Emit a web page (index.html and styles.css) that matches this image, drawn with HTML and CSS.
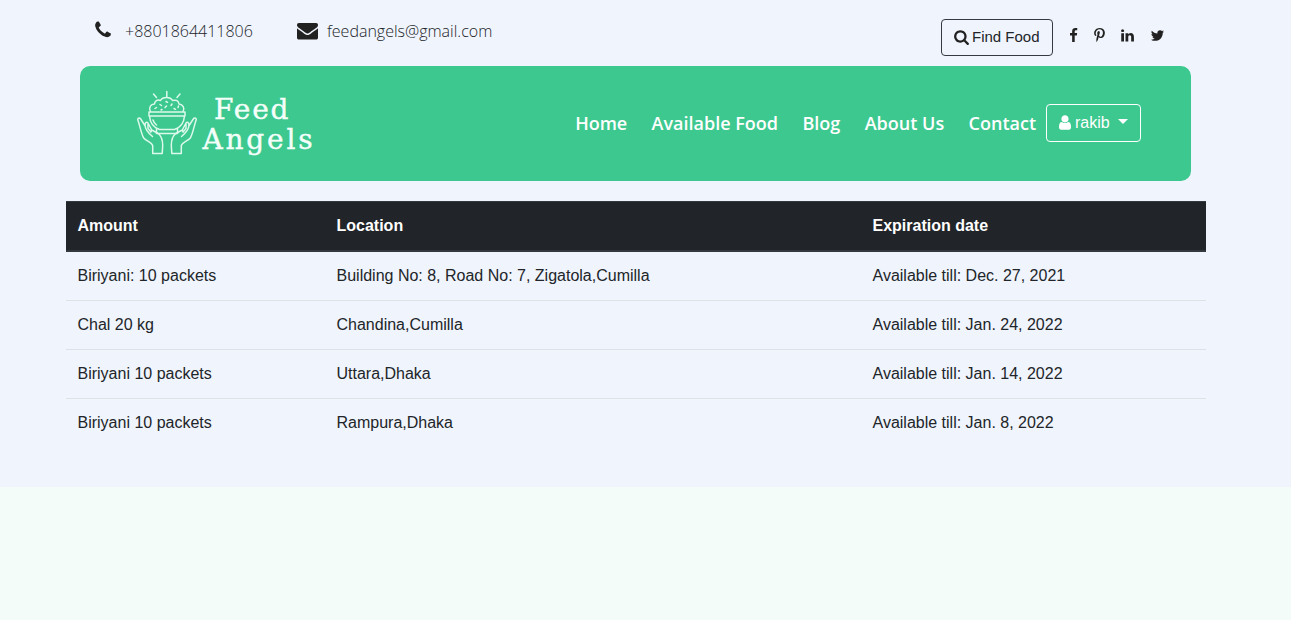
FILE: index.html
```
<!DOCTYPE html>
<html lang="en">
<head>
<meta charset="utf-8">
<title>Feed Angels</title>
<link rel="stylesheet" href="styles.css">
</head>
<body>
<div class="page">
  <header class="topbar">
    <div class="contact">
      <svg class="icon-phone" viewBox="0 0 1792 1792"><path d="M1600 1240q0 27-10 70.5t-21 68.500q-21 50-122 106-94 51-186 51-27 0-53-3.500t-57.500-12.500-47-14.500-55.500-20.500-49-18q-98-35-175-83-127-79-264-216t-216-264q-48-77-83-175-3-9-18-49t-20.500-55.500-14.500-47-12.500-57.500-3.500-53q0-92 51-186 56-101 106-122 25-11 68.500-21t70.500-10q14 0 21 3 18 6 53 76 11 19 30 54t35 63.500 31 53.500q3 4 17.500 25t21.500 35.500 7 28.500q0 20-28.500 50t-62 55-62 53-28.500 46q0 9 5 22.500t8.500 20.500 14 24 11.500 19q76 137 174 235t235 174q2 1 19 11.500t24 14 20.500 8.500 22.500 5q18 0 46-28.500t53-62 55-62 50-28.500q14 0 28.500 7t35.500 21.500 25 17.500q25 15 53.500 31t63.500 35 54 30q70 35 76 53 3 7 3 21z"/></svg>
      <span class="phone">+8801864411806</span>
      <svg class="icon-mail" viewBox="0 0 1792 1792"><path d="M1792 710v794q0 66-47 113t-113 47h-1472q-66 0-113-47t-47-113v-794q44 49 101 87 362 246 497 345 57 42 92.500 65.500t94.500 48 110 24.500h2q51 0 110-24.500t94.500-48 92.500-65.500q170-123 498-345 57-39 100-87zm0-294q0 79-49 151t-122 123q-376 261-468 325-10 7-42.500 31t-54 38.500-52 32.500-57.500 27-50 9h-2q-23 0-50-9t-57.500-27-52-32.500-54-38.500-42.500-31q-91-64-262-182.500t-205-142.500q-62-42-117-115.500t-55-136.500q0-78 41.500-130t118.500-52h1472q65 0 112.500 47t47.500 113z"/></svg>
      <span class="mail">feedangels@gmail.com</span>
    </div>
    <div class="actions">
      <button class="btn btn-find"><svg class="icon-btn" viewBox="64 0 1664 1792"><path d="M1216 832q0-185-131.500-316.500t-316.500-131.500-316.500 131.500-131.500 316.500 131.500 316.500 316.500 131.500 316.500-131.500 131.500-316.500zm512 832q0 52-38 90t-90 38q-54 0-90-38l-343-342q-179 124-399 124-143 0-273.500-55.500t-225-150-150-225-55.500-273.500 55.500-273.500 150-225 225-150 273.500-55.500 273.500 55.500 225 150 150 225 55.500 273.500q0 220-124 399l343 343q37 37 37 90z"/></svg>Find Food</button>
      <div class="social">
        <svg viewBox="0 0 1792 1792"><path d="M1343 12v264h-157q-86 0-116 36t-30 108v189h293l-39 296h-254v759h-306v-759h-255v-296h255v-218q0-186 104-288.500t277-102.500q147 0 228 12z"/></svg>
        <svg viewBox="0 0 1792 1792"><path d="M256 597q0-108 37.500-203.500t103.500-166.500 152-123 185-78 202-26q158 0 294 66.500t221 193.500 85 287q0 96-19 188t-60 177-100 149.500-145 103-189 38.500q-68 0-135-32t-96-88q-10 39-28 112.500t-23.500 95-20.500 71-26 71-32 62.500-46 77.500-62 86.500l-14 5-9-10q-15-157-15-188 0-92 21.500-206.500t66.500-287.500 52-203q-32-65-32-169 0-83 52-156t132-73q61 0 95 40.500t34 102.500q0 66-44 191t-44 187q0 63 45 104.500t109 41.500q55 0 102-25t78.500-68 56-95 38-110.500 20-111 6.500-99.500q0-173-109.500-269.500t-285.500-96.500q-200 0-334 129.500t-134 328.500q0 44 12.500 85t27 65 27 45.500 12.500 30.500q0 28-15 73t-37 45q-2 0-17-3-51-15-90.500-56t-61-94.500-32.500-108-11-106.500z"/></svg>
        <svg viewBox="0 0 1792 1792"><path d="M477 625v991h-330v-991h330zm21-306q1 73-50.500 122t-135.500 49h-2q-82 0-132-49t-50-122q0-74 51.500-122.500t134.500-48.500 133 48.500 51 122.500zm1166 729v568h-329v-530q0-105-40.500-164.500t-126.500-59.500q-63 0-105.500 34.500t-63.500 85.500q-11 30-11 81v553h-329q2-399 2-647t-1-296l-1-48h329v144h-2q20-32 41-56t56.500-52 87-43.500 114.500-15.500q171 0 275 113.500t104 332.500z"/></svg>
        <svg viewBox="0 0 1792 1792"><path d="M1684 408q-67 98-162 167 1 14 1 42 0 130-38 259.500t-115.500 248.500-184.500 210.500-258 146-323 54.500q-271 0-496-145 35 4 78 4 225 0 401-138-105-2-188-64.500t-114-159.500q33 5 61 5 43 0 85-11-112-23-185.500-111.500t-73.500-205.500v-4q68 38 146 41-66-44-105-115t-39-154q0-88 44-163 121 149 294.500 238.500t371.500 99.500q-8-38-8-74 0-134 94.500-228.500t228.500-94.500q140 0 236 102 109-21 205-78-37 115-142 178 93-10 186-50z"/></svg>
      </div>
    </div>
  </header>

  <nav class="navbar">
    <svg class="logo" viewBox="140 84.5 190 80">
      <g class="logo-art">
        <path d="M166.800 92v5.500M153.500 94.500l3 3.500M180 94.500l-3 3.500"/>
        <path d="M150.500 112c-2-4 0-7.500 4-7.500 0-3 3-5 6-3.500 2-4 10-4 12 0 4-1 6 0 6.500 3.500 4 .5 6 4 4 7.500"/>
        <path d="M155 109l1.500-1M160 105l1.500 1M165 108l1.500-1.500M166 102l1.500.8M171 106l1-1.500M174 109l1.500.8M178 108l.5-1.500M161 110.500l1-.5"/>
        <path d="M149 112.500h36v4h-36zM149.500 116.500c.5 6.500 4 11.500 10 13.500h15c6-2 9.500-7 10-13.500M156.500 129v5h21v-5M153 120.500c.8 2.500 2 4 3.500 5"/>
        <path id="hand" d="M152.700 154v-8c-1-3.500-6-4-9-7.500-2.500-4-3.700-12-6-18.500 0-2 2-2 3-.5l4.500 7c-.5-3 1-4.500 2.500-3.500l4 7.500 6.500 3.500c4 3 4.500 8 4.500 12l-.5 8zM145.200 126.500c0 3 2 6 7.300 10.500M148 124v5l3 3.500M151 129c1 2 .5 3-.5 3.500"/>
        <use href="#hand" transform="matrix(-1 0 0 1 334 0)"/>
      </g>
      <text x="214" y="119.500" textLength="74.500">Feed</text>
      <text x="202.500" y="149.500" textLength="110">Angels</text>
    </svg>
    <div class="menu">
      <a>Home</a><a>Available Food</a><a>Blog</a><a>About Us</a><a>Contact</a>
      <button class="btn btn-user"><svg class="icon-user" viewBox="256 0 1280 1792"><path d="M1536 1399q0 109-62.500 187t-150.500 78h-854q-88 0-150.500-78t-62.500-187q0-85 8.500-160.500t31.500-152 58.500-131 94-89 134.500-34.500q131 128 313 128t313-128q76 0 134.500 34.500t94 89 58.500 131 31.500 152 8.500 160.500zm-256-887q0 159-112.500 271.500t-271.500 112.500-271.500-112.500-112.500-271.500 112.500-271.500 271.500-112.500 271.500 112.500 112.500 271.500z"/></svg>rakib<span class="caret"></span></button>
    </div>
  </nav>

  <table class="food">
    <thead>
      <tr><th class="col-amount">Amount</th><th class="col-location">Location</th><th>Expiration date</th></tr>
    </thead>
    <tbody>
      <tr><td>Biriyani: 10 packets</td><td>Building No: 8, Road No: 7, Zigatola,Cumilla</td><td>Available till: Dec. 27, 2021</td></tr>
      <tr><td>Chal 20 kg</td><td>Chandina,Cumilla</td><td>Available till: Jan. 24, 2022</td></tr>
      <tr><td>Biriyani 10 packets</td><td>Uttara,Dhaka</td><td>Available till: Jan. 14, 2022</td></tr>
      <tr><td>Biriyani 10 packets</td><td>Rampura,Dhaka</td><td>Available till: Jan. 8, 2022</td></tr>
    </tbody>
  </table>
</div>
</body>
</html>
```
FILE: styles.css
```
* { box-sizing: border-box; }
body {
  margin: 0;
  background: #f3fcf9;
  color: #212529;
  font: 16px/24px "Liberation Sans", Arial, sans-serif;
}
svg { fill: #212121; flex: none; }
.page { height: 487px; background: #f0f4fc; overflow: hidden; }

.topbar {
  display: flex;
  justify-content: space-between;
  height: 66px;
  margin: 0 126px 0 93px;
}
.contact {
  display: flex;
  height: 62px;
  align-items: center;
  font: 300 16px/24px "Open Sans", sans-serif;
}
.icon-phone { width: 20px; height: 20px; margin: 0 12px 2px 0; }
.icon-mail { width: 21px; height: 21px; margin: 0 9px 2px 0; }
.phone { width: 172px; }
.actions { display: flex; align-items: flex-start; padding-top: 19px; }
.btn {
  display: flex;
  align-items: center;
  padding: 0 12px;
  border: 1px solid #343a40;
  border-radius: 4px;
  background: transparent;
  color: #212529;
  font: 16px/24px "Liberation Sans", Arial, sans-serif;
  white-space: nowrap;
}
.btn-find { width: 112px; height: 37px; padding-bottom: 1px; font-size: 15px; }
.icon-btn { width: 15px; height: 16px; margin-right: 3px; }
.social { display: flex; gap: 13px; padding: 9px 0 0 13px; }
.social svg { width: 15px; height: 15px; }
.social svg:nth-child(2) { margin-left: -2px; }
.social svg:nth-child(4) { margin-left: 2px; }

.navbar {
  display: flex;
  justify-content: space-between;
  align-items: center;
  height: 115px;
  margin: 0 100px 0 80px;
  padding: 0 50px 0 60px;
  border-radius: 10px;
  background: #3dc88f;
}
.logo { width: 190px; height: 80px; overflow: visible; }
.logo text {
  fill: #f4fffa;
  stroke: #f4fffa;
  stroke-width: 0.4;
  font: 28px "DejaVu Serif", serif;
}
.logo-art path {
  fill: none;
  stroke: #dcf9ec;
  stroke-width: 1.5;
  stroke-linecap: round;
  stroke-linejoin: round;
}
.menu { display: flex; align-items: center; padding-bottom: 2px; }
.menu a {
  margin-right: 24.400px;
  color: #fff;
  font: 600 18px/24px "Open Sans", sans-serif;
}
.menu a:nth-of-type(5) { margin-right: 10px; }
.btn-user { width: 95px; height: 38px; border-color: #fff; color: #fff; }
.icon-user { width: 12px; height: 17px; margin-right: 4px; fill: #fff; }
.caret {
  margin: 0 0 3px 8px;
  border: 5px solid transparent;
  border-top-color: #fff;
  border-bottom: 0;
}

.food {
  width: 1140px;
  margin: 20px 0 0 66px;
  border-collapse: collapse;
  table-layout: fixed;
}
.food th, .food td { padding: 12px 12px 12px 11.500px; text-align: left; }
.food td { border-top: 1px solid #dee2e6; height: 49px; }
.food th {
  height: 49px;
  padding-top: 12px;
  padding-bottom: 11px;
  border-top: 1px solid #32383e;
  border-bottom: 2px solid #32383e;
  background: #212529;
  color: #fff;
}
.food tbody tr:first-child td { border-top: 0; }
.col-amount { width: 259px; }
.col-location { width: 536px; }
```
